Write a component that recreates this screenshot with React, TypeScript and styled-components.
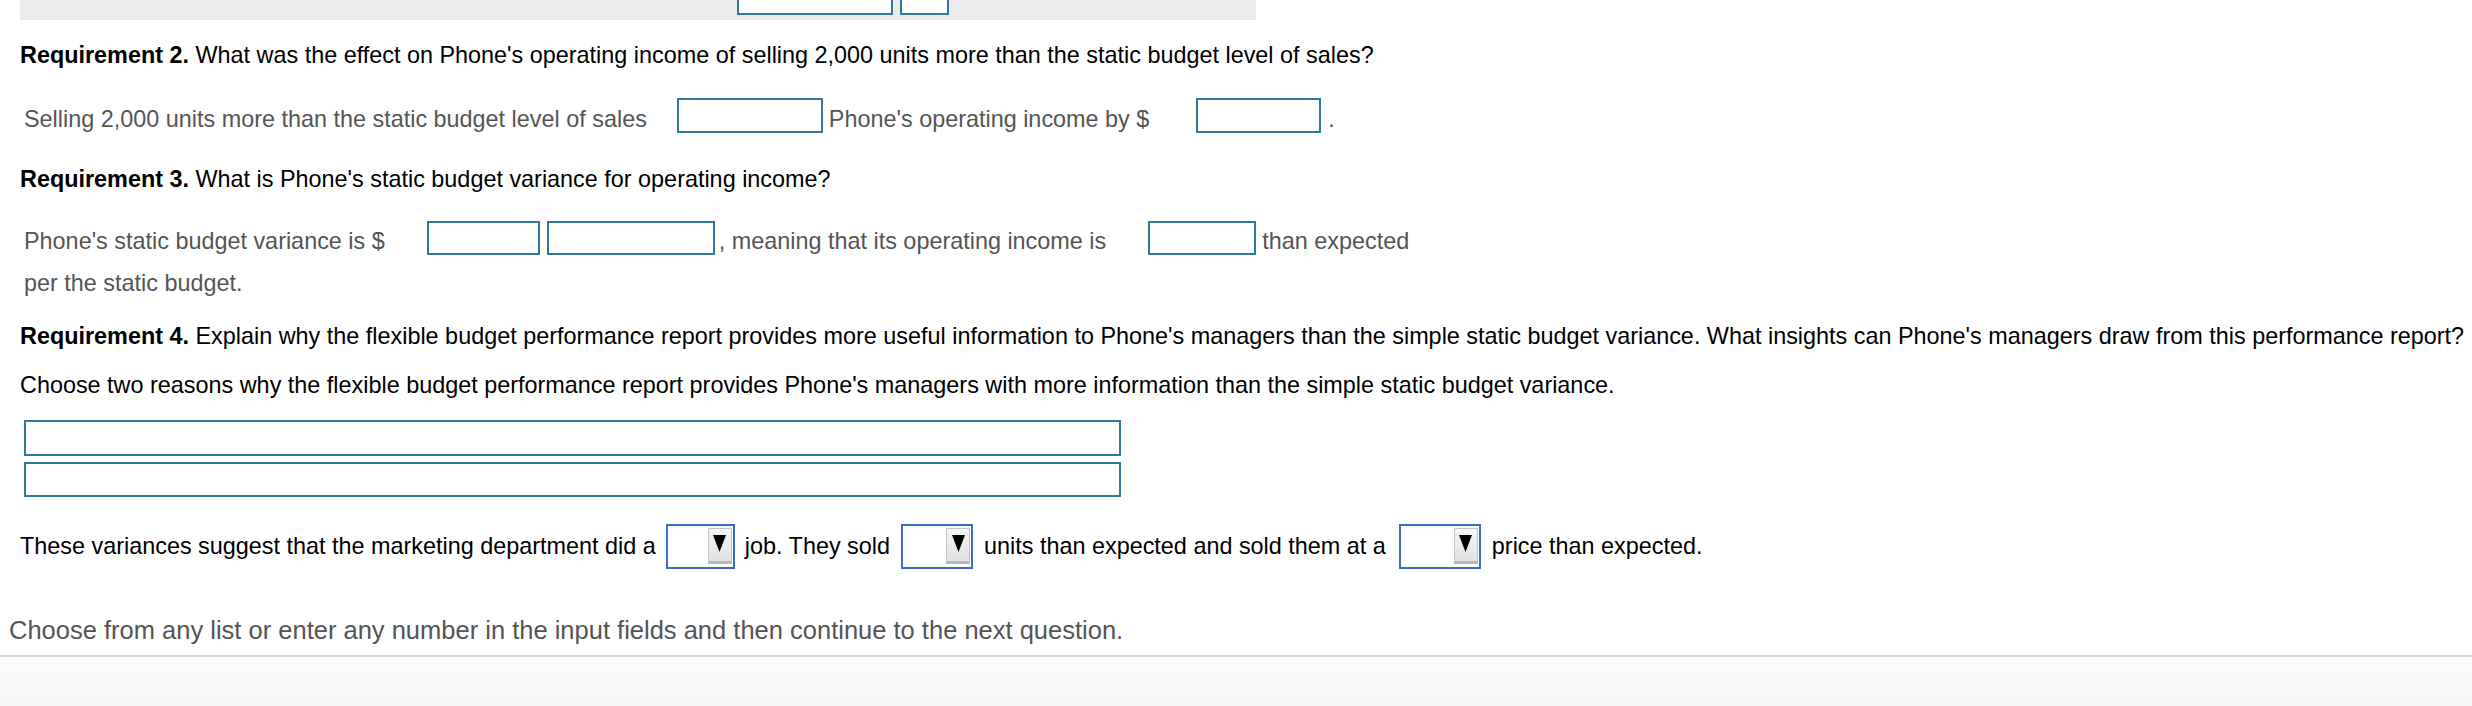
import React from "react";
import styled, { createGlobalStyle } from "styled-components";

const Global = createGlobalStyle`
  html, body { margin: 0; padding: 0; background: #ffffff; }
  body { font-family: "Liberation Sans", Arial, sans-serif; }
`;

const Page = styled.div`
  width: 2472px;
  height: 706px;
  display: flex;
  flex-direction: column;
  font-size: 23.4px;
  line-height: 28px;
  color: #000;
  overflow: hidden;
`;

const TopBar = styled.div`
  margin-left: 20px;
  width: 1236px;
  height: 20px;
  background: #ebebeb;
  display: flex;
  align-items: flex-end;
  padding-left: 717px;
  padding-bottom: 5px;
  box-sizing: border-box;
  gap: 7px;
  overflow: hidden;
  flex-shrink: 0;
`;

const Content = styled.div`
  display: flex;
  flex-direction: column;
  padding-left: 20px;
`;

const Question = styled.div<{ $mt: number }>`
  margin-top: ${(p) => p.$mt}px;
  white-space: nowrap;
  color: #000;
`;

const Strong = styled.b`
  font-weight: bold;
`;

const AnswerRow = styled.div<{ $mt: number }>`
  margin-top: ${(p) => p.$mt}px;
  padding-left: 4px;
  display: flex;
  align-items: flex-end;
  white-space: nowrap;
  color: #555;
`;

const AnswerLine = styled.div<{ $mt: number }>`
  margin-top: ${(p) => p.$mt}px;
  padding-left: 4px;
  white-space: nowrap;
  color: #555;
`;

const Field = styled.div<{ $w: number; $h?: number; $ml?: number; $mr?: number }>`
  width: ${(p) => p.$w}px;
  height: ${(p) => p.$h ?? 35}px;
  margin-left: ${(p) => p.$ml ?? 0}px;
  margin-right: ${(p) => p.$mr ?? 0}px;
  border: 2px solid #2f7a9c;
  background: #fff;
  box-sizing: border-box;
  flex-shrink: 0;
`;

const BarField = styled(Field)`
  height: 30px;
`;

const WideBox = styled.div<{ $mt: number; $h: number }>`
  margin-top: ${(p) => p.$mt}px;
  margin-left: 4px;
  width: 1097px;
  height: ${(p) => p.$h}px;
  border: 2px solid #2f7a9c;
  box-sizing: border-box;
  background: #fff;
`;

const ChoiceRow = styled.div`
  margin-top: 27px;
  display: flex;
  align-items: center;
  white-space: nowrap;
  color: #000;
`;

const ChoiceText = styled.span<{ $ml?: number; $mr?: number }>`
  position: relative;
  top: -1px;
  margin-left: ${(p) => p.$ml ?? 0}px;
  margin-right: ${(p) => p.$mr ?? 0}px;
`;

const Select = styled.div<{ $w: number }>`
  width: ${(p) => p.$w}px;
  height: 45px;
  border: 2px solid #3b6bcc;
  box-sizing: border-box;
  background: #fff;
  display: flex;
  justify-content: flex-end;
  align-items: stretch;
  padding: 2px 1px 3px 0;
  flex-shrink: 0;
`;

const ArrowButton = styled.div`
  width: 24px;
  box-sizing: border-box;
  border: 1px solid #c4c4c4;
  border-bottom: 3px solid #b8b8b8;
  background: linear-gradient(#f4f4f4, #e2e2e2);
  display: flex;
  justify-content: center;
  padding-top: 6px;
`;

const Footer = styled.div`
  margin-top: 46px;
  padding-left: 9px;
  font-size: 25.5px;
  line-height: 30px;
  color: #555;
  white-space: nowrap;
`;

const Rule = styled.div`
  margin-top: 10px;
  height: 2px;
  background: #d2d5dd;
  flex-shrink: 0;
`;

const Bottom = styled.div`
  flex: 1;
  background: linear-gradient(180deg, #fbfbfb 0%, #f5f5f5 100%);
`;

const Dropdown = ({ w }: { w: number }) => (
  <Select $w={w}>
    <ArrowButton>
      <svg width="13" height="17" viewBox="0 0 13 17">
        <polygon points="0,0 13,0 6.5,17" fill="#000" />
      </svg>
    </ArrowButton>
  </Select>
);

export default function App() {
  return (
    <>
      <Global />
      <Page>
        <TopBar>
          <BarField $w={156} />
          <BarField $w={49} />
        </TopBar>
        <Content>
          <Question $mt={21}>
            <Strong>Requirement 2.</Strong> What was the effect on Phone's operating income of selling 2,000 units more than the static budget level of sales?
          </Question>
          <AnswerRow $mt={29}>
            <span>Selling 2,000 units more than the static budget level of sales</span>
            <Field $w={146} $ml={30} $mr={6} />
            <span>Phone's operating income by $</span>
            <Field $w={125} $ml={47} $mr={7} />
            <span>.</span>
          </AnswerRow>
          <Question $mt={32}>
            <Strong>Requirement 3.</Strong> What is Phone's static budget variance for operating income?
          </Question>
          <AnswerRow $mt={28}>
            <span>Phone's static budget variance is $</span>
            <Field $w={113} $h={34} $ml={42} $mr={7} />
            <Field $w={168} $h={34} $mr={4} />
            <span>, meaning that its operating income is</span>
            <Field $w={108} $h={34} $ml={42} $mr={6} />
            <span>than expected</span>
          </AnswerRow>
          <AnswerLine $mt={14}>per the static budget.</AnswerLine>
          <Question $mt={25}>
            <Strong>Requirement 4.</Strong> Explain why the flexible budget performance report provides more useful information to Phone's managers than the simple static budget variance. What insights can Phone's managers draw from this performance report?
          </Question>
          <Question $mt={21}>
            Choose two reasons why the flexible budget performance report provides Phone's managers with more information than the simple static budget variance.
          </Question>
          <WideBox $mt={21} $h={36} />
          <WideBox $mt={6} $h={35} />
          <ChoiceRow>
            <ChoiceText $mr={10}>These variances suggest that the marketing department did a</ChoiceText>
            <Dropdown w={69} />
            <ChoiceText $ml={10} $mr={11}>job. They sold</ChoiceText>
            <Dropdown w={72} />
            <ChoiceText $ml={11} $mr={13}>units than expected and sold them at a</ChoiceText>
            <Dropdown w={82} />
            <ChoiceText $ml={11}>price than expected.</ChoiceText>
          </ChoiceRow>
        </Content>
        <Footer>Choose from any list or enter any number in the input fields and then continue to the next question.</Footer>
        <Rule />
        <Bottom />
      </Page>
    </>
  );
}
